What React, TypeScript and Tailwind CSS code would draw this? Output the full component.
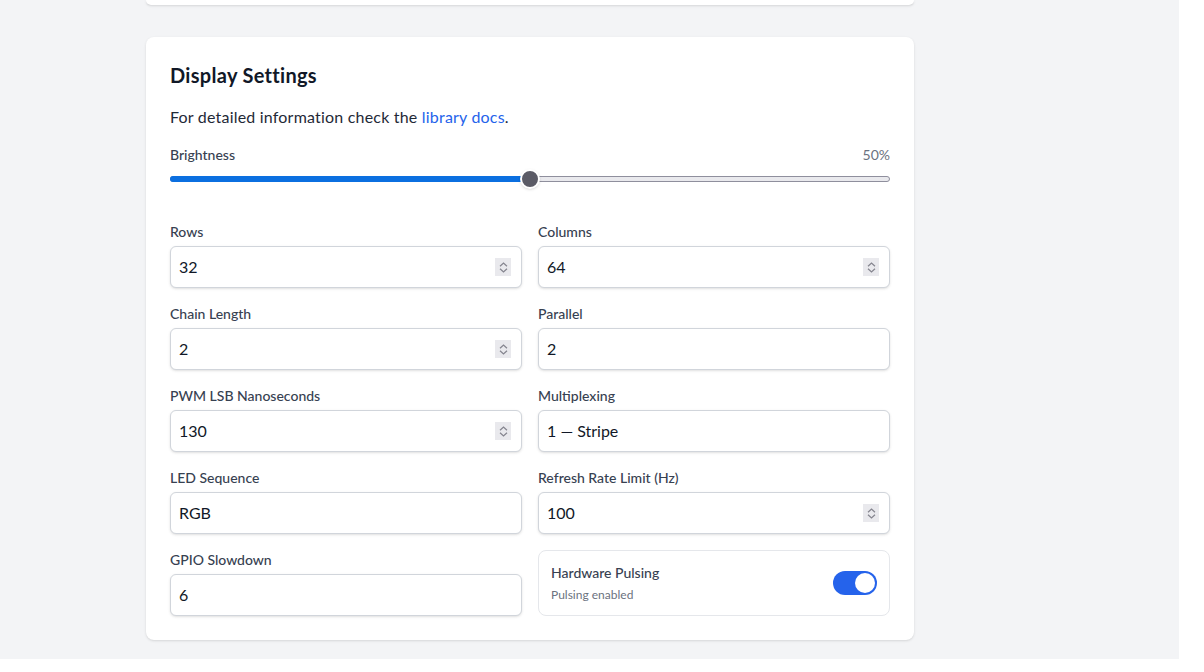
import React from "react";

function Spinner() {
  return (
    <div className="absolute right-[10px] top-1/2 -translate-y-1/2 w-[16px] h-[18px] bg-[#e9e9ed] flex flex-col items-center justify-center gap-[1px]">
      <svg width="9" height="5" viewBox="0 0 9 5" fill="none">
        <path d="M1 4.3 L4.5 1 L8 4.3" stroke="#85858f" strokeWidth="1.2" />
      </svg>
      <svg width="9" height="5" viewBox="0 0 9 5" fill="none">
        <path d="M1 0.7 L4.5 4 L8 0.7" stroke="#85858f" strokeWidth="1.2" />
      </svg>
    </div>
  );
}

function Field({ label, value, spin }: { label: string; value: string; spin?: boolean }) {
  return (
    <div className="flex flex-col gap-1">
      <label className="text-sm leading-5 font-medium text-[#374151]">{label}</label>
      <div className="relative h-[42px] rounded-md border border-[#d1d5db] bg-white shadow-sm flex items-center px-2">
        <span className="text-base text-[#111827]">{value}</span>
        {spin && <Spinner />}
      </div>
    </div>
  );
}

export default function App() {
  return (
    <div className="w-[1204px] h-[672px] bg-white" style={{ fontFamily: "Lato, 'Noto Sans', sans-serif" }}>
      <div className="w-[1179px] h-[659px] bg-[#f3f4f6] overflow-hidden pl-[146px]">
        <div className="w-[768px] flex flex-col gap-8">
          <div className="h-[5px] bg-white rounded-b-lg shadow-sm" />
          <div className="bg-white rounded-lg shadow-sm p-6">
            <h2 className="text-xl leading-7 font-bold tracking-[0.3px] text-[#111827] mb-4">Display Settings</h2>
            <p className="text-base leading-6 tracking-[0.2px] text-[#1f2937] mb-4">
              For detailed information check the <span className="text-[#2563eb]">library docs</span>.
            </p>
            <div className="flex justify-between text-sm leading-5">
              <span className="font-medium text-[#374151]">Brightness</span>
              <span className="text-[#6b7280]">50%</span>
            </div>
            <div className="relative h-[12px] mt-2 mb-[37px]">
              <div className="absolute left-0 right-0 top-[3px] h-[6px] rounded-full bg-[#e9e9ed] border border-[#8f8f9d]" />
              <div className="absolute left-0 w-[360px] top-[3px] h-[6px] rounded-full bg-[#0b6fe0]" />
              <div className="absolute left-[350px] top-[-4px] w-[20px] h-[20px] rounded-full bg-[#5b5b66] border-2 border-white shadow" />
            </div>
            <div className="grid grid-cols-2 gap-x-4 gap-y-4">
              <Field label="Rows" value="32" spin />
              <Field label="Columns" value="64" spin />
              <Field label="Chain Length" value="2" spin />
              <Field label="Parallel" value="2" />
              <Field label="PWM LSB Nanoseconds" value="130" spin />
              <Field label="Multiplexing" value="1 — Stripe" />
              <Field label="LED Sequence" value="RGB" />
              <Field label="Refresh Rate Limit (Hz)" value="100" spin />
              <Field label="GPIO Slowdown" value="6" />
              <div className="rounded-lg border border-[#e5e7eb] p-3 flex items-center justify-between">
                <div className="flex flex-col gap-1">
                  <span className="text-sm leading-5 font-medium text-[#374151]">Hardware Pulsing</span>
                  <span className="text-xs leading-4 text-[#6b7280]">Pulsing enabled</span>
                </div>
                <div className="w-[44px] h-[24px] rounded-full bg-[#2563eb] flex items-center justify-end px-[2px]">
                  <div className="w-[20px] h-[20px] rounded-full bg-white" />
                </div>
              </div>
            </div>
          </div>
        </div>
      </div>
    </div>
  );
}
